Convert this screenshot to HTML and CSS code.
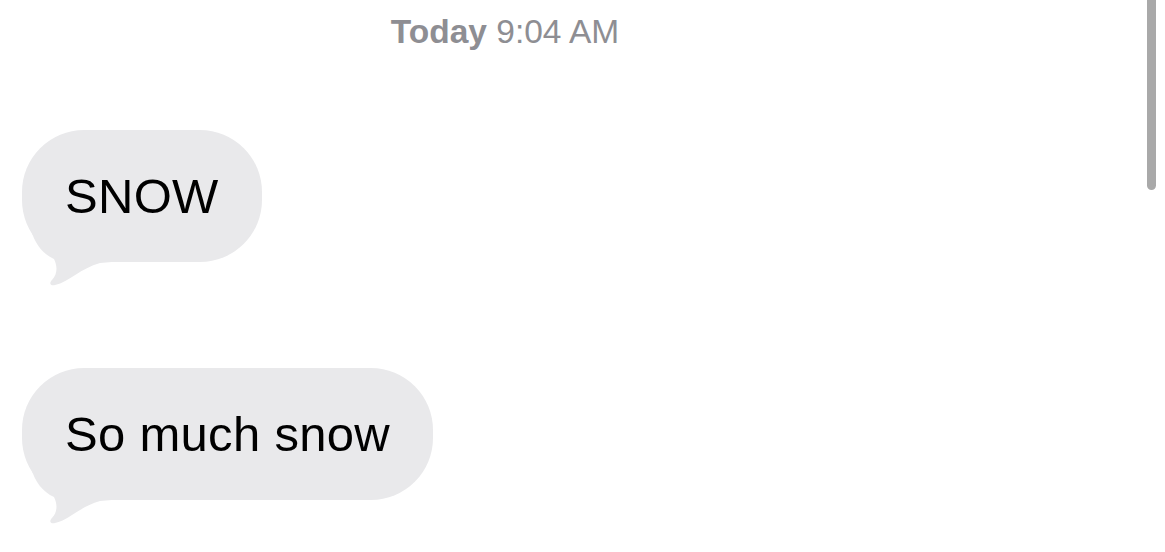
FILE: index.html
```html
<!DOCTYPE html>
<html lang="en">
<head>
  <meta charset="UTF-8">
  <title>Messages</title>
  <link rel="stylesheet" href="styles.css">
</head>
<body>

  <!-- TIMESTAMP -->
  <div class="stamp"><b>Today</b> 9:04 AM</div>

  <!-- THREAD -->
  <div class="thread">
    <div class="bubble">
      SNOW
      <svg class="tail" viewBox="0 0 90 56" width="90" height="56">
        <path d="M9 0 C13 14 21 24 32 29 C36 37 35 45 30 50 C27 53 28 56 33 55 C47 52 59 38 78 33 L90 32 L90 0 Z"/>
      </svg>
    </div>
    <div class="bubble">
      So much snow
      <svg class="tail" viewBox="0 0 90 56" width="90" height="56">
        <path d="M9 0 C13 14 21 24 32 29 C36 37 35 45 30 50 C27 53 28 56 33 55 C47 52 59 38 78 33 L90 32 L90 0 Z"/>
      </svg>
    </div>
  </div>

  <div class="scroll-thumb"></div>

</body>
</html>
```

FILE: styles.css
```css
html, body {
  margin: 0;
  padding: 0;
  background: #ffffff;
  font-family: 'Liberation Sans', Arial, sans-serif;
}

.stamp {
  width: 1010px;
  padding-top: 13px;
  text-align: center;
  font-size: 33.5px;
  line-height: 38px;
  color: #8e8e93;
}

.stamp b {
  font-weight: 600;
}

.thread {
  margin-top: 79px;
  padding-left: 22px;
  padding-bottom: 40px;
  display: flex;
  flex-direction: column;
  align-items: flex-start;
  gap: 106px;
}

.bubble {
  position: relative;
  height: 132px;
  padding: 0 43px;
  display: flex;
  align-items: center;
  background: #e9e9eb;
  border-radius: 62px;
  font-size: 49px;
  letter-spacing: 0.3px;
  color: #000;
}

.tail {
  position: absolute;
  left: 0;
  top: 100px;
  fill: #e9e9eb;
}

.scroll-thumb {
  position: fixed;
  top: 0;
  right: 9px;
  width: 9px;
  height: 190px;
  background: #a9a9a9;
  border-radius: 0 0 5px 5px;
}
```
